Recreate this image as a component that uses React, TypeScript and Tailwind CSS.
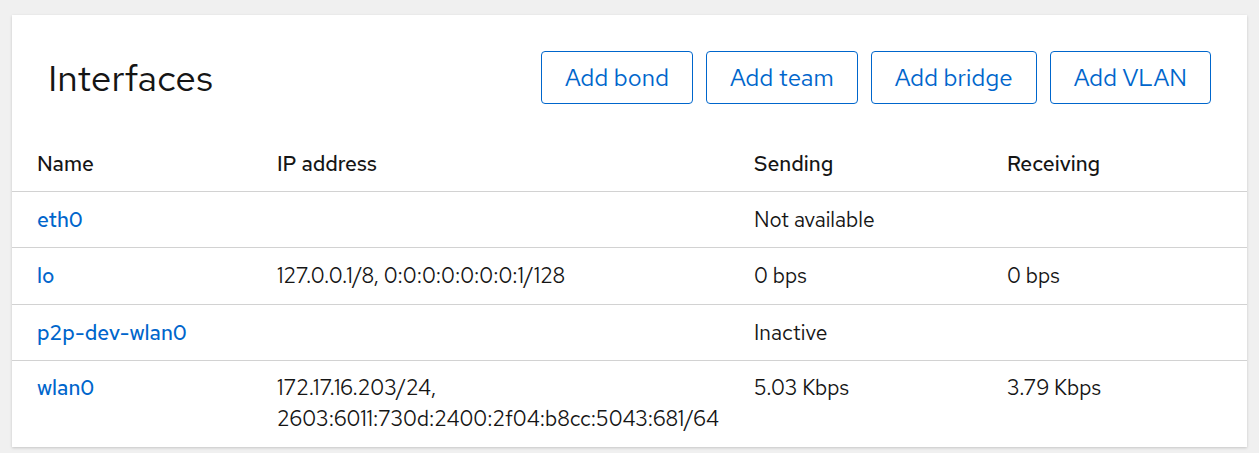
const rows = [
  { name: "eth0", ip: "", sending: "Not available", receiving: "" },
  { name: "lo", ip: "127.0.0.1/8, 0:0:0:0:0:0:0:1/128", sending: "0 bps", receiving: "0 bps" },
  { name: "p2p-dev-wlan0", ip: "", sending: "Inactive", receiving: "" },
  {
    name: "wlan0",
    ip: "172.17.16.203/24, 2603:6011:730d:2400:2f04:b8cc:5043:681/64",
    sending: "5.03 Kbps",
    receiving: "3.79 Kbps",
  },
];

const buttons = ["Add bond", "Add team", "Add bridge", "Add VLAN"];

export default function App() {
  return (
    <div
      className="min-h-screen bg-[#f0f0f0] px-[12px] pt-[15px] text-[#151515]"
      style={{ fontFamily: '"Red Hat Text", "Open Sans", "Noto Sans", sans-serif' }}
    >
      <section className="bg-white shadow-[0_1px_3px_rgba(0,0,0,0.12),0_1px_2px_rgba(0,0,0,0.06)]">
        <header className="flex items-center justify-between px-[36px] pb-[32px] pt-[36px]">
          <h2 className="text-[37px] font-normal leading-[37px]">Interfaces</h2>
          <div className="flex gap-[13px]">
            {buttons.map((b) => (
              <button
                key={b}
                className="h-[53px] rounded-[4px] border border-[#0066cc] bg-white px-[23px] text-[24px] leading-none text-[#0066cc]"
              >
                {b}
              </button>
            ))}
          </div>
        </header>

        <div className="grid grid-cols-[240px_477px_253px_1fr] border-b border-[#d2d2d2] pb-[12px] pl-[25px] pt-[13px] text-[21px] font-medium leading-[30px]">
          <div>Name</div>
          <div>IP address</div>
          <div>Sending</div>
          <div>Receiving</div>
        </div>

        {rows.map((r, i) => (
          <div
            key={r.name}
            className={
              i < rows.length - 1
                ? "grid grid-cols-[240px_477px_253px_1fr] border-b border-[#d2d2d2] pb-[12.3px] pl-[25px] pt-[13px] text-[21px] leading-[30px]"
                : "grid grid-cols-[240px_477px_253px_1fr] pb-[13px] pl-[25px] pt-[12.5px] text-[21px] leading-[30.5px]"
            }
          >
            <div>
              <a href="#" className="font-medium text-[#0066cc]">
                {r.name}
              </a>
            </div>
            <div className="pr-4">{r.ip}</div>
            <div>{r.sending}</div>
            <div>{r.receiving}</div>
          </div>
        ))}
      </section>
    </div>
  );
}
